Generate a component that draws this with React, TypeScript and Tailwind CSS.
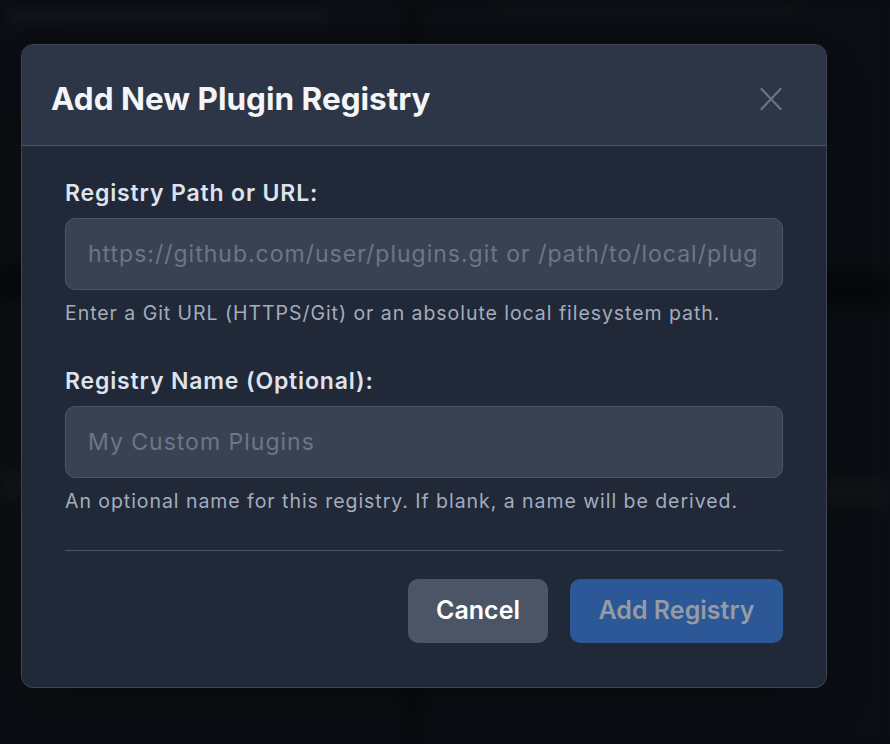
import React from 'react';

const font = { fontFamily: 'Inter, "Noto Sans", sans-serif' };

function CloseIcon() {
  return (
    <svg width="22" height="24" viewBox="0 0 22 24" fill="none" stroke="currentColor" strokeWidth="2.2" strokeLinecap="round">
      <path d="M1.5 2 20.5 22" />
      <path d="M20.5 2 1.5 22" />
    </svg>
  );
}

function Field({ label, placeholder, help }: { label: string; placeholder: string; help: string }) {
  return (
    <div className="flex flex-col">
      <label className="text-[23px] leading-[28px] font-semibold tracking-[0.85px] text-[#dde3ec]">{label}</label>
      <input
        placeholder={placeholder}
        className="mt-[11px] h-[72px] w-full rounded-[10px] border border-[#4a5568] bg-[#394253] px-[22px] text-[23px] tracking-[1px] text-white outline-none placeholder:text-[#6c7686]"
        style={font}
      />
      <p className="mt-[11px] text-[19.5px] leading-[24px] tracking-[0.95px] text-[#a3adbd]">{help}</p>
    </div>
  );
}

export default function App() {
  return (
    <div className="relative h-[744px] w-[890px] overflow-hidden bg-[#0a0d12]" style={font}>
      {/* blurred app behind the overlay */}
      <div className="absolute inset-0 flex blur-[6px] opacity-60">
        <div className="flex w-[420px] flex-col border-r-[18px] border-[#07090c] bg-[#0c0e13] pt-[10px]">
          <div className="ml-2 h-[12px] w-[320px] rounded bg-[#1a1c20]" />
          <div className="mt-[243px] h-[35px] w-full bg-[#050608]" />
          <div className="mt-[170px] h-[30px] w-full bg-[#16171b]" />
        </div>
        <div className="flex flex-1 flex-col bg-[#0b0d12] pt-[8px]">
          <div className="ml-[80px] h-[8px] w-[300px] rounded bg-[#15171b]" />
          <div className="mt-[257px] h-[35px] w-full bg-[#050608]" />
          <div className="mt-[170px] h-[30px] w-full bg-[#14161a]" />
        </div>
      </div>

      <div className="relative pl-[21px] pt-[44px]">
        <div className="flex h-[644px] w-[806px] flex-col overflow-hidden rounded-[12px] border border-[#3c4657] bg-[#212837] shadow-2xl">
          <div className="flex h-[101px] shrink-0 items-center justify-between border-b border-[#4a5568] bg-[#2d3647] pl-[29px] pr-[44px] pt-[7px]">
            <h2 className="text-[31.5px] font-bold text-[#f4f5f7]">Add New Plugin Registry</h2>
            <button className="text-[#6b7482]">
              <CloseIcon />
            </button>
          </div>

          <div className="flex flex-1 flex-col px-[43px] pt-[33px]">
            <Field
              label="Registry Path or URL:"
              placeholder="https://github.com/user/plugins.git or /path/to/local/plugins"
              help="Enter a Git URL (HTTPS/Git) or an absolute local filesystem path."
            />
            <div className="mt-[42px]">
              <Field
                label="Registry Name (Optional):"
                placeholder="My Custom Plugins"
                help="An optional name for this registry. If blank, a name will be derived."
              />
            </div>

            <div className="mt-[37px] border-t border-[#4a5263]" />

            <div className="mt-[28px] flex justify-end gap-[22px]">
              <button className="h-[64px] w-[140px] rounded-[10px] bg-[#4b5566] text-[25px] font-semibold text-white">
                Cancel
              </button>
              <button disabled className="h-[64px] w-[213px] rounded-[10px] bg-[#2d5897] text-[25px] font-semibold text-[#959ba4]">
                Add Registry
              </button>
            </div>
          </div>
        </div>
      </div>
    </div>
  );
}
